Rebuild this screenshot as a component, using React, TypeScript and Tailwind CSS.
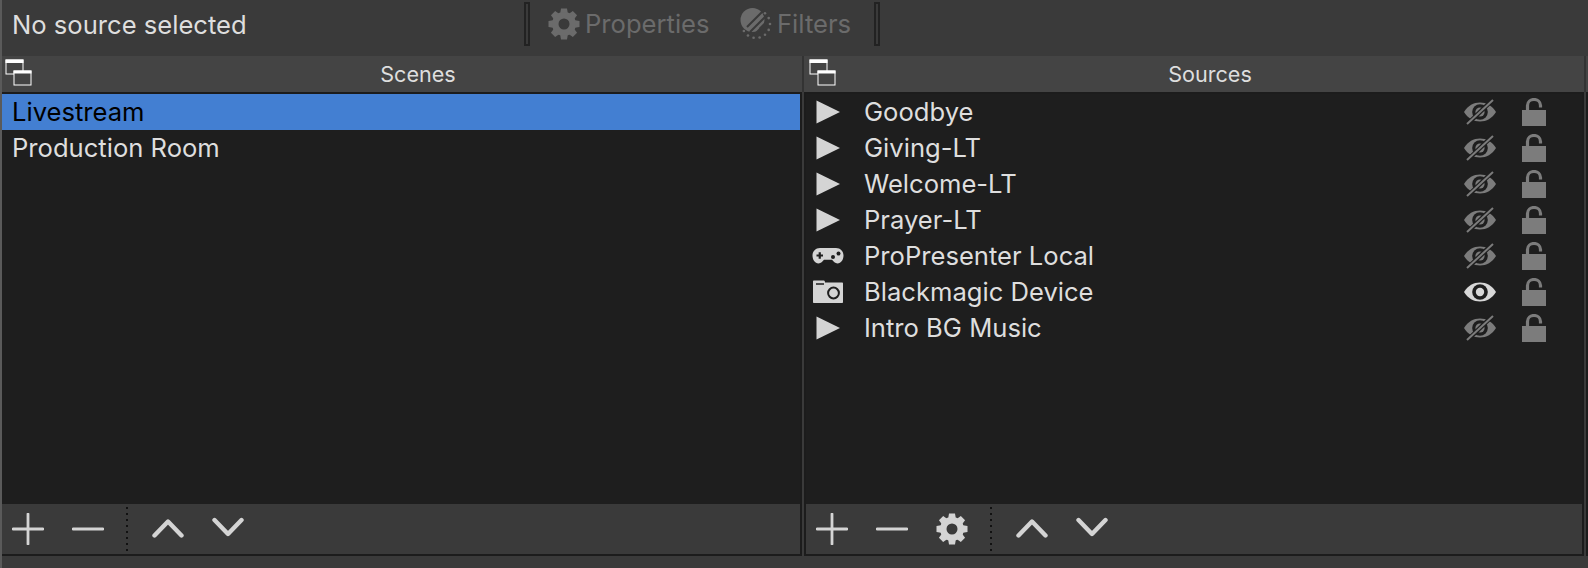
const scenes = ['Livestream', 'Production Room']

type SourceKind = 'media' | 'game' | 'camera'

const sources: { name: string; kind: SourceKind; visible?: boolean }[] = [
  { name: 'Goodbye', kind: 'media' },
  { name: 'Giving-LT', kind: 'media' },
  { name: 'Welcome-LT', kind: 'media' },
  { name: 'Prayer-LT', kind: 'media' },
  { name: 'ProPresenter Local', kind: 'game' },
  { name: 'Blackmagic Device', kind: 'camera', visible: true },
  { name: 'Intro BG Music', kind: 'media' },
]

function Gear({ size, color }: { size: number; color: string }) {
  return (
    <svg width={size} height={size} viewBox="0 0 32 32" className="shrink-0">
      {[0, 45, 90, 135, 180, 225, 270, 315].map((a) => (
        <path key={a} d="M13 0.5h6l1 6h-8z" fill={color} transform={`rotate(${a} 16 16)`} />
      ))}
      <circle cx="16" cy="16" r="8.7" fill="none" stroke={color} strokeWidth="6.4" />
    </svg>
  )
}

function FiltersIcon() {
  const dots = [-50, -25, 0, 25, 50, 75, 100, 125, 150]
  return (
    <svg width="32" height="32" viewBox="0 0 32 32" className="shrink-0">
      <circle cx="12.5" cy="12" r="12" fill="#6b6b6b" />
      <path d="M24 2L7 19M27 7L10 24M30 11L13 28" stroke="#3a3a3a" strokeWidth="2" />
      <path d="M19 20l8 8 5-5-4-12z" fill="#3a3a3a" />
      {dots.map((a) => (
        <circle
          key={a}
          cx={16 + 14 * Math.cos((a * Math.PI) / 180)}
          cy={16 + 14 * Math.sin((a * Math.PI) / 180)}
          r="1.3"
          fill="#6b6b6b"
        />
      ))}
    </svg>
  )
}

function WindowsIcon() {
  return (
    <svg width="28" height="28" viewBox="0 0 28 28" className="shrink-0">
      <rect x="1" y="1" width="17" height="14" fill="none" stroke="#ffffff" strokeWidth="1" />
      <rect x="0.5" y="0.5" width="18" height="3.5" fill="#ffffff" />
      <rect x="9" y="12" width="17" height="14" fill="#444444" stroke="#ffffff" strokeWidth="1" />
      <rect x="8.5" y="11.5" width="18" height="3" fill="#ffffff" />
    </svg>
  )
}

function Plus() {
  return (
    <svg width="32" height="32" viewBox="0 0 32 32" className="shrink-0">
      <path d="M1 16h30M16 1v30" stroke="#d4d4d4" strokeWidth="2.8" strokeLinecap="round" />
    </svg>
  )
}

function Minus() {
  return (
    <svg width="32" height="32" viewBox="0 0 32 32" className="shrink-0">
      <path d="M1 16h30" stroke="#d4d4d4" strokeWidth="2.8" strokeLinecap="round" />
    </svg>
  )
}

function Chevron({ up }: { up?: boolean }) {
  return (
    <svg width="32" height="32" viewBox="0 0 32 32" className="shrink-0">
      <path
        d={up ? 'M2.5 22.5L16 8.5l13.5 14' : 'M2.5 7l13.5 14L29.5 7'}
        fill="none"
        stroke="#d4d4d4"
        strokeWidth="4.4"
        strokeLinecap="round"
        strokeLinejoin="round"
      />
    </svg>
  )
}

function Play() {
  return (
    <svg width="32" height="24" viewBox="0 0 32 24">
      <path d="M4.5 0.5L28 12 4.5 23.5z" fill="#d4d4d4" />
    </svg>
  )
}

function GameIcon() {
  return (
    <svg width="32" height="24" viewBox="0 0 32 24">
      <path
        d="M8 4h16c4.400 0 7.500 3.200 7.500 7.500s-2.500 8-6 8c-2.500 0-4-2.200-5.500-3.700h-8c-1.500 1.500-3 3.700-5.500 3.700-3.500 0-6-3.700-6-8S3.600 4 8 4z"
        fill="#d4d4d4"
      />
      <path d="M4.500 11.500h6.500M7.750 8.250v6.500" stroke="#1e1e1e" strokeWidth="2.200" />
      <circle cx="21" cy="13" r="2" fill="#1e1e1e" />
      <circle cx="26.500" cy="9.500" r="2" fill="#1e1e1e" />
    </svg>
  )
}

function CameraIcon() {
  return (
    <svg width="32" height="24" viewBox="0 0 32 24">
      <path
        d="M2 0.500h9.500c.8 0 1.500.7 1.500 1.500V2.500h17c.6 0 1 .4 1 1v18.500c0 .6-.4 1-1 1H2c-.6 0-1-.4-1-1V1.500c0-.6.400-1 1-1z"
        fill="#d4d4d4"
      />
      <path d="M4 4h8" stroke="#1e1e1e" strokeWidth="1.500" />
      <circle cx="21.500" cy="13" r="5.400" fill="none" stroke="#1e1e1e" strokeWidth="2" />
    </svg>
  )
}

function Eye({ visible }: { visible?: boolean }) {
  const color = visible ? '#d8d8d8' : '#7c7c7c'
  return (
    <svg width="32" height="26" viewBox="0 0 32 26" className="shrink-0">
      <path
        d="M0 13C4 6.500 9.500 3.500 16 3.500S28 6.500 32 13c-4 6.500-9.500 9.500-16 9.500S4 19.500 0 13z"
        fill={color}
      />
      <circle cx="16" cy="13" r="7.800" fill="#1e1e1e" />
      <circle cx="16" cy="13" r={visible ? 4.2 : 4.6} fill={color} />
      {!visible && (
        <>
          <path d="M3 25.500L29 0.500" stroke="#1e1e1e" strokeWidth="4.5" />
          <path d="M3 25L29 1" stroke={color} strokeWidth="2" />
        </>
      )}
    </svg>
  )
}

function Lock() {
  return (
    <svg width="24" height="28" viewBox="0 0 24 28" className="shrink-0">
      <path d="M5.500 12V7.500C5.500 3.800 8.500 1.500 12 1.500S18.500 3.800 18.500 7.500V9.500" fill="none" stroke="#7c7c7c" strokeWidth="3.200" />
      <rect x="0" y="12" width="24" height="16" fill="#7c7c7c" />
    </svg>
  )
}

function DockTitle({ title, iconLeft }: { title: string; iconLeft: string }) {
  return (
    <div className="relative flex h-[36px] items-center bg-[#444444] pl-[32px] pt-[2px]">
      <div className={`absolute top-[3px] ${iconLeft}`}>
        <WindowsIcon />
      </div>
      <span className="flex-1 text-center text-[21.6px] leading-none text-[#dedede]">{title}</span>
    </div>
  )
}

function Handle() {
  return <div className="h-[44px] w-[6px] border-2 border-[#222222] bg-[#3a3a3a]" />
}

function ToolButton({ children }: { children: React.ReactNode }) {
  return <div className="flex h-[32px] w-[60px] items-center justify-center">{children}</div>
}

function Toolbar({ withGear }: { withGear?: boolean }) {
  return (
    <div className="flex h-[52px] items-center border-b-2 border-[#1c1c1c] bg-[#3a3a3a]">
      <div className="-ml-[4px] flex">
        <ToolButton><Plus /></ToolButton>
        <ToolButton><Minus /></ToolButton>
        {withGear && (
          <ToolButton><Gear size={32} color="#d4d4d4" /></ToolButton>
        )}
      </div>
      <div className="ml-[8px] mr-[10px] h-[44px] w-[2px] bg-[repeating-linear-gradient(to_bottom,#111111_0,#111111_2px,transparent_2px,transparent_6px)]" />
      <ToolButton><Chevron up /></ToolButton>
      <ToolButton><Chevron /></ToolButton>
    </div>
  )
}

// splitter between docks, darker where it crosses the title bars
function Splitter() {
  return (
    <div className="w-[2px] shrink-0">
      <div className="h-[36px] bg-[#333333]" />
    </div>
  )
}

export default function App() {
  return (
    <div
      className="flex h-[568px] w-[1588px] flex-col overflow-hidden border-l-2 border-[#5a5a5a] bg-[#3a3a3a] text-[25.6px]"
      style={{ fontFamily: 'Inter, "Noto Sans", sans-serif' }}
    >
      {/* top bar */}
      <div className="flex h-[56px] shrink-0 items-start pl-[10px]">
        <span className="mt-[9px] w-[512px] leading-[31px] text-[#dedede]">No source selected</span>
        <div className="mt-[2px]"><Handle /></div>
        <div className="ml-[18px] mt-[8px] flex items-center gap-[5px]">
          <Gear size={32} color="#6b6b6b" />
          <span className="w-[125px] whitespace-nowrap leading-[32px] text-[#6b6b6b]">Properties</span>
        </div>
        <div className="ml-[30px] mt-[8px] flex items-center gap-[5px]">
          <FiltersIcon />
          <span className="w-[73px] whitespace-nowrap leading-[32px] text-[#6b6b6b]">Filters</span>
        </div>
        <div className="ml-[24px] mt-[2px]"><Handle /></div>
      </div>

      <div className="flex">
        {/* scenes */}
        <section className="flex w-[800px] shrink-0 flex-col">
          <DockTitle title="Scenes" iconLeft="left-[3px]" />
          <div className="flex flex-col border-r-2 border-[#1c1c1c]">
            <div className="flex h-[412px] flex-col border-t-2 border-[#1c1c1c] bg-[#1e1e1e]">
              {scenes.map((scene, i) => (
                <div
                  key={scene}
                  className={
                    i === 0
                      ? 'flex h-[36px] items-center bg-[#437fd2] pl-[10px] text-[#000000]'
                      : 'flex h-[36px] items-center pl-[10px] text-[#dedede]'
                  }
                >
                  {scene}
                </div>
              ))}
            </div>
            <Toolbar />
          </div>
        </section>

        <Splitter />

        {/* sources */}
        <section className="flex w-[780px] shrink-0 flex-col">
          <DockTitle title="Sources" iconLeft="left-[5px]" />
          <div className="flex flex-col border-x-2 border-[#1c1c1c]">
            <div className="flex h-[412px] flex-col border-t-2 border-[#1c1c1c] bg-[#1e1e1e]">
              {sources.map((source) => (
                <div key={source.name} className="flex h-[36px] items-center pl-[6px] text-[#dedede]">
                  <div className="flex w-[52px] shrink-0">
                    {source.kind === 'media' && <Play />}
                    {source.kind === 'game' && <GameIcon />}
                    {source.kind === 'camera' && <CameraIcon />}
                  </div>
                  <span className="flex-1">{source.name}</span>
                  <div className="flex items-center gap-[26px] pr-[36px]">
                    <Eye visible={source.visible} />
                    <Lock />
                  </div>
                </div>
              ))}
            </div>
            <Toolbar withGear />
          </div>
        </section>

        <Splitter />

        {/* edge of the next dock, cut off by the window */}
        <div className="flex w-[2px] shrink-0 flex-col">
          <div className="h-[36px] bg-[#444444]" />
          <div className="h-[464px] bg-[#1c1c1c]" />
        </div>
      </div>
    </div>
  )
}
